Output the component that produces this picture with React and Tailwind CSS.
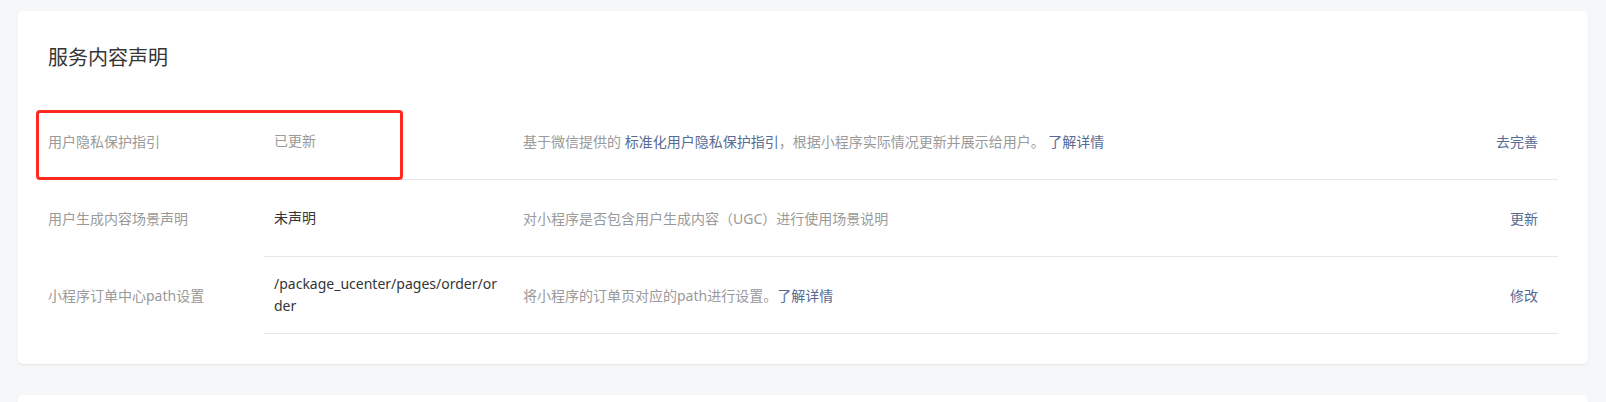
import React from "react";

const font = { fontFamily: '"Noto Sans", "Noto Sans CJK SC", sans-serif' };

function Row({ label, value, valueDark, desc, action }) {
  return (
    <div className="flex items-stretch h-[77px]">
      <div className="w-[216px] shrink-0 flex items-center text-[14px] text-[#9a9a9a]">
        {label}
      </div>
      <div className="flex-1 flex items-stretch border-b border-[#e7e7eb]">
        <div
          className={
            "w-[256px] shrink-0 flex items-center pl-[10px] pr-[18px] text-[14px] leading-[22px] break-all " +
            (valueDark ? "text-[#353535]" : "text-[#9a9a9a]")
          }
        >
          <span>{value}</span>
        </div>
        <div className="flex-1 flex items-center pl-[3px] text-[14px] text-[#9a9a9a]">
          <span>{desc}</span>
        </div>
        <div className="flex items-center pr-[20px] text-[14px] text-[#576b95]">
          {action}
        </div>
      </div>
    </div>
  );
}

export default function App() {
  return (
    <div className="min-h-[402px] bg-[#f6f7f9] px-[18px] pt-[11px]" style={font}>
      <div className="relative bg-white rounded-[5px] shadow-[0_1px_2px_rgba(0,0,0,0.08)] px-[30px] pt-[33px] pb-[30px]">
        <h2 className="text-[20px] leading-[28px] text-[#353535] font-normal">服务内容声明</h2>
        <div className="mt-[31px]">
          <Row
            label="用户隐私保护指引"
            value="已更新"
            desc={
              <>
                基于微信提供的{" "}
                <span className="text-[#576b95]">标准化用户隐私保护指引</span>
                ，根据小程序实际情况更新并展示给用户。{" "}
                <span className="text-[#576b95]">了解详情</span>
              </>
            }
            action="去完善"
          />
          <Row
            label="用户生成内容场景声明"
            value="未声明"
            valueDark
            desc="对小程序是否包含用户生成内容（UGC）进行使用场景说明"
            action="更新"
          />
          <Row
            label="小程序订单中心path设置"
            value="/package_ucenter/pages/order/order"
            valueDark
            desc={
              <>
                将小程序的订单页对应的path进行设置。
                <span className="text-[#576b95]">了解详情</span>
              </>
            }
            action="修改"
          />
        </div>
        <div className="absolute left-[18px] top-[99px] w-[367px] h-[70px] border-[3px] border-[#ff2a1f] rounded-[4px] pointer-events-none" />
      </div>
      <div className="mt-[31px] h-[20px] bg-white rounded-t-[5px] shadow-[0_1px_2px_rgba(0,0,0,0.08)]" />
    </div>
  );
}
